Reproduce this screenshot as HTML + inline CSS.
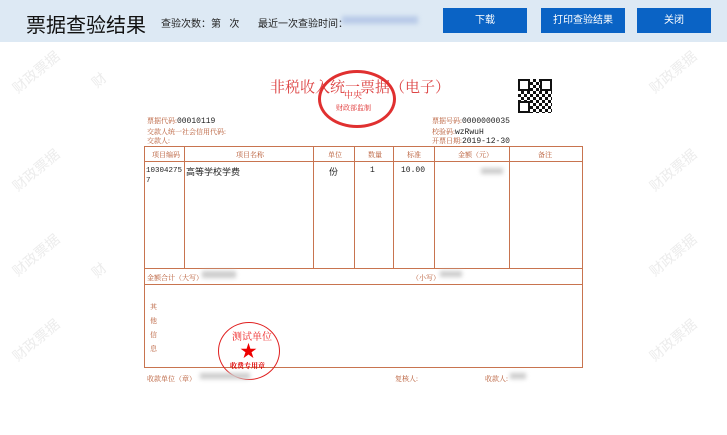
<!DOCTYPE html><html><head><meta charset="utf-8"><style>
body{margin:0;width:727px;height:435px;background:#fff;position:relative;overflow:hidden;font-family:"Liberation Sans","Noto Sans CJK SC",sans-serif}
.hd{position:absolute;left:0;top:0;width:727px;height:42px;background:#dde9f4}
.t{position:absolute;left:26px;top:9px;font-size:20px;color:#111}
.s{position:absolute;top:15px;font-size:10px;color:#222}
.b{position:absolute;top:8px;height:25px;background:#0a63c5;color:#fff;font-size:10px;text-align:center;line-height:25px}
.wm{position:absolute;color:#ececec;font-size:14px;transform:rotate(-40deg)}
.r{position:absolute;color:#b5552e;font-family:"Liberation Serif","Noto Serif CJK SC",serif;font-size:7px}
.m{position:absolute;font-family:"Liberation Mono","Noto Sans CJK SC",monospace;font-size:8px;color:#222}
.bl{position:absolute;background:#ccc;filter:blur(2px)}
.ln{position:absolute;background:#c8744f}
</style></head><body>
<div class="hd"></div>
<div class="t">票据查验结果</div>
<div class="s" style="left:161px">查验次数：第<span style="color:#aab">&nbsp;&nbsp;&nbsp;</span>次</div>
<div class="s" style="left:258px">最近一次查验时间：</div>
<div class="bl" style="left:342px;top:16px;width:76px;height:8px;background:#b9cbe8"></div>
<div class="b" style="left:443px;width:84px">下载</div>
<div class="b" style="left:541px;width:84px">打印查验结果</div>
<div class="b" style="left:637px;width:74px">关闭</div>
<div class="wm" style="left:8px;top:62px">财政票据</div>
<div class="wm" style="left:645px;top:62px">财政票据</div>
<div class="wm" style="left:8px;top:160px">财政票据</div>
<div class="wm" style="left:645px;top:160px">财政票据</div>
<div class="wm" style="left:8px;top:245px">财政票据</div>
<div class="wm" style="left:645px;top:245px">财政票据</div>
<div class="wm" style="left:8px;top:330px">财政票据</div>
<div class="wm" style="left:645px;top:330px">财政票据</div>
<div class="wm" style="left:92px;top:70px">财</div><div class="wm" style="left:92px;top:260px">财</div>
<div class="r" style="left:270px;top:76px;font-size:15px;color:#d44">非税收入统一票据（电子）</div>
<div style="position:absolute;left:318px;top:70px;width:72px;height:52px;border:3px solid #e03030;border-radius:50%"></div>
<div class="r" style="left:344px;top:88px;font-size:9px;color:#d22">中央</div>
<div class="r" style="left:336px;top:103px;font-size:7px;color:#d22">财政部监制</div>
<div style="position:absolute;left:518px;top:79px;width:34px;height:34px;background:repeating-conic-gradient(#111 0 25%,#fff 0 50%) 0 0/6px 6px"></div>
<div style="position:absolute;left:518px;top:79px;width:8px;height:8px;border:2px solid #111;background:#fff"></div>
<div style="position:absolute;left:540px;top:79px;width:8px;height:8px;border:2px solid #111;background:#fff"></div>
<div style="position:absolute;left:518px;top:101px;width:8px;height:8px;border:2px solid #111;background:#fff"></div>
<div class="r" style="left:147px;top:116px">票据代码:<span class="m" style="position:static">00010119</span></div>
<div class="r" style="left:147px;top:127px">交款人统一社会信用代码:</div>
<div class="r" style="left:147px;top:136px">交款人:</div>
<div class="r" style="left:432px;top:116px">票据号码:<span class="m" style="position:static">0000000035</span></div>
<div class="r" style="left:432px;top:127px">校验码:<span class="m" style="position:static">wzRwuH</span></div>
<div class="r" style="left:432px;top:136px">开票日期:<span class="m" style="position:static">2019-12-30</span></div>
<div style="position:absolute;left:144px;top:146px;width:437px;height:220px;border:1px solid #c8744f"></div>
<div class="ln" style="left:144px;top:161px;width:439px;height:1px"></div>
<div class="ln" style="left:144px;top:268px;width:439px;height:1px"></div>
<div class="ln" style="left:144px;top:284px;width:439px;height:1px"></div>
<div class="ln" style="left:184px;top:146px;width:1px;height:122px"></div>
<div class="ln" style="left:313px;top:146px;width:1px;height:122px"></div>
<div class="ln" style="left:354px;top:146px;width:1px;height:122px"></div>
<div class="ln" style="left:393px;top:146px;width:1px;height:122px"></div>
<div class="ln" style="left:434px;top:146px;width:1px;height:122px"></div>
<div class="ln" style="left:509px;top:146px;width:1px;height:122px"></div>
<div class="r" style="left:152px;top:150px">项目编码</div>
<div class="r" style="left:236px;top:150px">项目名称</div>
<div class="r" style="left:328px;top:150px">单位</div>
<div class="r" style="left:368px;top:150px">数量</div>
<div class="r" style="left:407px;top:150px">标准</div>
<div class="r" style="left:458px;top:150px">金额（元）</div>
<div class="r" style="left:538px;top:150px">备注</div>
<div class="m" style="left:146px;top:166px;line-height:10px;font-size:7.5px">10304275<br>7</div>
<div class="m" style="left:186px;top:165px;font-size:9px">高等学校学费</div>
<div class="m" style="left:329px;top:165px;font-size:9px">份</div>
<div class="m" style="left:370px;top:166px">1</div>
<div class="m" style="left:401px;top:166px">10.00</div>
<div class="bl" style="left:481px;top:168px;width:22px;height:6px"></div>
<div class="r" style="left:147px;top:273px">金额合计（大写）</div>
<div class="bl" style="left:202px;top:271px;width:34px;height:7px"></div>
<div class="r" style="left:412px;top:273px">（小写）</div>
<div class="bl" style="left:440px;top:271px;width:22px;height:6px"></div>
<div class="r" style="left:150px;top:300px;line-height:14px">其<br>他<br>信<br>息</div>
<div style="position:absolute;left:218px;top:322px;width:60px;height:56px;border:1.5px solid #e02020;border-radius:50%"></div>
<div class="r" style="left:232px;top:328px;font-size:10px;color:#e22">测试单位</div>
<div style="position:absolute;left:240px;top:337px;font-size:17px;color:#e00">★</div>
<div class="r" style="left:230px;top:361px;color:#d00;font-weight:bold">收费专用章</div>
<div class="r" style="left:147px;top:374px">收款单位（章）</div>
<div class="bl" style="left:200px;top:373px;width:50px;height:6px"></div>
<div class="r" style="left:395px;top:374px">复核人:</div>
<div class="r" style="left:485px;top:374px">收款人:</div>
<div class="bl" style="left:510px;top:373px;width:16px;height:6px"></div>
</body></html>
